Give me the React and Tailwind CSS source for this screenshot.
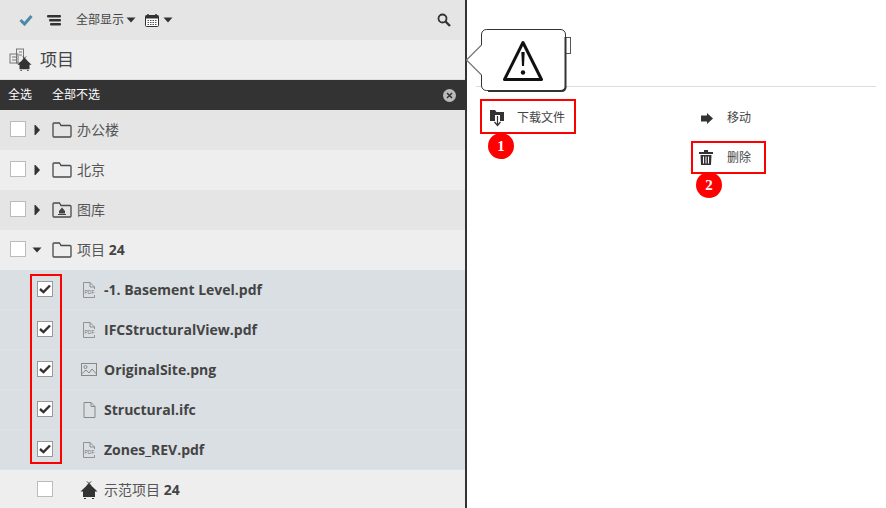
const Caret = ({ d = "down", className = "" }) => (
  <svg width="10" height="10" viewBox="0 0 10 10" className={className} fill="#333">
    {d === "down" ? <path d="M0.5 2.5h9L5 7.5z" /> : <path d="M2.5 0h1L8 5 3.5 10h-1z" />}
  </svg>
);

const Folder = ({ inner }) => (
  <svg width="20" height="16" viewBox="0 0 20 16" fill="none">
    <path d="M1 3V14a1 1 0 0 0 1 1H18a1 1 0 0 0 1-1V4.500a1 1 0 0 0-1-1H9L7.500 1H2A1 1 0 0 0 1 2z" stroke="#4a4a4a" strokeWidth="1.300" />
    {inner && <path d="M10 5.500 13 9v2.500H7V9z M6 12h8v1H6z" fill="#444" />}
  </svg>
);

const Box = ({ checked }) => (
  <span className={`w-[14px] h-[14px] mb-[2px] box-content shrink-0 border flex items-center justify-center bg-white ${checked ? "border-[#999]" : "border-[#bbb]"}`}>
    {checked && (
      <svg width="12" height="10" viewBox="0 0 12 10"><path d="M1 5 4.500 8.200 11 1.500" stroke="#333" strokeWidth="2.400" fill="none" /></svg>
    )}
  </span>
);

const PdfIcon = () => (
  <svg width="14" height="16" viewBox="0 0 14 16" fill="none" stroke="#888" strokeWidth="0.900">
    <path d="M1.500.5H8L12.500 5v2M1.500.5V15.500H12.500V13M8 .5V5H12.500" />
    <text x="2.500" y="12" fontSize="5" fontFamily="Liberation Sans" fill="#777" stroke="none" textLength="10">PDF</text>
  </svg>
);
const ImgIcon = () => (
  <svg width="16" height="14" viewBox="0 0 16 14" fill="none" stroke="#888">
    <rect x=".5" y=".5" width="15" height="12" />
    <circle cx="4.500" cy="4" r="1.500" />
    <path d="M.5 11 5 7l3 3 3-4 4.500 5" />
  </svg>
);
const FileIcon = () => (
  <svg width="13" height="16" viewBox="0 0 13 16" fill="none" stroke="#888">
    <path d="M1 .5H8L12 4.500V15.500H1zM8 .5V4.500H12" />
  </svg>
);
const House = ({ className = "", size = 18 }) => (
  <svg width={size} height={size} viewBox="0 0 18 18" className={className}>
    <path d="M9 2.500 17.500 10.500H15V16H3V10.500H.5z" fill="#333" />
    <path d="M7 .5 11 4.500M11 .5 7 4.500M4 17.500h2M12 17.500h2" stroke="#333" />
  </svg>
);

const folderRows = [
  { name: "办公楼", bg: "bg-[#e5e5e5]" },
  { name: "北京", bg: "bg-[#eeeeee]" },
  { name: "图库", bg: "bg-[#e5e5e5]", inner: true },
];
const files = [
  ["-1. Basement Level.pdf", <PdfIcon />],
  ["IFCStructuralView.pdf", <PdfIcon />],
  ["OriginalSite.png", <ImgIcon />],
  ["Structural.ifc", <FileIcon />],
  ["Zones_REV.pdf", <PdfIcon />],
];

const Badge = ({ n, className }) => (
  <span className={`absolute w-[26px] h-[26px] rounded-full bg-[#fe0000] text-white font-bold text-[15px] flex items-center justify-center font-['Liberation_Serif',serif] ${className}`}>{n}</span>
);

export default function App() {
  return (
    <div className="relative w-[886px] h-[508px] overflow-hidden flex bg-white text-[#444] font-['Open_Sans','Noto_Sans_CJK_SC',sans-serif]">
      <div className="w-[467px] h-full shrink-0 border-r-2 border-[#333] flex flex-col">
        <div className="h-10 shrink-0 bg-[#e5e5e5] flex items-center pl-[19px] pr-[14px]">
          <svg width="14" height="12" viewBox="0 0 14 12"><path d="M1.500 6 5.500 10 12.500 2" stroke="#4a8aa8" strokeWidth="3" fill="none" /></svg>
          <svg width="14" height="12" viewBox="0 0 14 12" className="ml-[14px]" fill="#333">
            <rect x="0" y="1" width="14" height="2.500" rx="1" /><rect x="2" y="5" width="12" height="2.500" rx="1" /><rect x="3" y="9" width="11" height="2.500" rx="1" />
          </svg>
          <span className="ml-[15px] text-xs text-[#444]">全部显示</span>
          <Caret className="ml-[2px]" />
          <svg width="14" height="13" viewBox="0 0 14 13" className="ml-[9px]">
            <rect x=".5" y="1.500" width="13" height="11" rx="1" fill="#fff" stroke="#333" />
            <rect x=".5" y="1.500" width="13" height="3" fill="#333" />
            <path d="M3 0v3M11 0v3" stroke="#333" strokeWidth="1.500" />
            <path d="M2.500 6.500h9M2.500 8.500h9M2.500 10.500h9" stroke="#555" strokeDasharray="1.500 1" />
          </svg>
          <Caret className="ml-[4px]" />
          <svg width="14" height="14" viewBox="0 0 14 14" className="ml-auto" fill="none" stroke="#333">
            <circle cx="5.500" cy="5.500" r="4" strokeWidth="1.800" />
            <path d="M8.500 8.500 13 13" strokeWidth="2.400" />
          </svg>
        </div>
        <div className="h-10 shrink-0 bg-[#eeeeee] border-b border-[#ddd] flex items-center pl-[9px]">
          <span className="relative w-[23px] h-[24px] block">
            <svg width="16" height="18" viewBox="0 0 16 18" className="absolute left-0 top-0" fill="none" stroke="#777">
              <rect x="7.500" y="1" width="7" height="14" /><rect x="1" y="6" width="8" height="9" />
              <path d="M3 9h4M3 12h4M10 4h3M10 7h3" />
            </svg>
            <House className="absolute left-[8px] top-[8px]" size={15} />
          </span>
          <span className="ml-[8px] text-[17px] text-[#444]">项目</span>
        </div>
        <div className="h-[30px] shrink-0 bg-[#333333] flex items-center pl-2 pr-[9px] text-xs text-white">
          <span>全选</span>
          <span className="ml-5">全部不选</span>
          <span className="ml-auto w-[13px] h-[13px] rounded-full bg-[#bbb] flex items-center justify-center">
            <svg width="7" height="7" viewBox="0 0 7 7"><path d="M1 1l5 5M6 1 1 6" stroke="#333" strokeWidth="1.500" /></svg>
          </span>
        </div>
        {folderRows.map((r) => (
          <div key={r.name} className={`h-10 shrink-0 flex items-center pl-[10px] ${r.bg}`}>
            <Box />
            <Caret d="right" className="ml-[6px]" />
            <span className="ml-[10px] flex"><Folder inner={r.inner} /></span>
            <span className="ml-[5px] text-sm text-[#555]">{r.name}</span>
          </div>
        ))}
        <div className="h-10 shrink-0 flex items-center pl-[10px] bg-[#eeeeee]">
          <Box />
          <Caret className="ml-[6px]" />
          <span className="ml-[10px] flex"><Folder /></span>
          <span className="ml-[5px] text-sm text-[#555]">项目 <b className="text-[#444]">24</b></span>
        </div>
        {files.map(([name, icon]) => (
          <div key={name} className="h-10 shrink-0 flex items-center pl-[37px] bg-[#dadfe3] border-b border-[#dde2e6]">
            <Box checked />
            <span className="ml-[28px] w-4 flex justify-center">{icon}</span>
            <span className="ml-[7px] text-sm font-bold text-[#444]">{name}</span>
          </div>
        ))}
        <div className="h-10 shrink-0 flex items-center pl-[37px] bg-[#eeeeee]">
          <Box />
          <House className="ml-[27px]" />
          <span className="ml-[6px] text-sm text-[#555]">示范项目 <b className="text-[#444]">24</b></span>
        </div>
      </div>

      <div className="flex-1 flex flex-col pl-[9px] pr-[10px] border-r border-[#ddd]">
        <div className="h-[87px] shrink-0 border-b border-[#ddd]" />
        <div className="grid grid-cols-2 w-[400px] text-xs text-[#444] pt-[21px] pl-[14px] gap-y-5">
          <div className="h-5 flex items-center">
            <svg width="15" height="18" viewBox="0 0 15 18">
              <path d="M0 1h5l1.500 2H14v9H10V6H5v6H0z" fill="#333" />
              <path d="M7.500 7v9M4.500 13 7.500 16.500 10.500 13" stroke="#333" fill="none" strokeWidth="1.200" />
            </svg>
            <span className="ml-[12px]">下载文件</span>
          </div>
          <div className="h-5 flex items-center pl-[18px]">
            <svg width="12" height="11" viewBox="0 0 12 11" fill="#333"><path d="M0 2.500h6V0l6 5.500L6 11V8.500H0z" /></svg>
            <span className="ml-[14px]">移动</span>
          </div>
          <div />
          <div className="h-5 flex items-center pl-[16px]">
            <svg width="14" height="15" viewBox="0 0 14 15" fill="#333" className="mb-[2px]">
              <path d="M0 2h5V0h4v2h5v2H0z" />
              <path d="M1.500 5h11L12 15H2zM4 6.500V13.500h1V6.500zM6.500 6.500V13.500h1V6.500zM9 6.500V13.500h1V6.500z" fillRule="evenodd" />
            </svg>
            <span className="ml-[14px]">删除</span>
          </div>
        </div>
      </div>

      {/* annotations and callout */}
      <span className="absolute left-[30px] top-[274px] w-[32px] h-[190px] border-2 border-[#fe0000]" />
      <span className="absolute left-[480px] top-[99px] w-[96px] h-[35px] border-2 border-[#fe0000]" />
      <span className="absolute left-[691px] top-[141px] w-[75px] h-[33px] border-2 border-[#fe0000]" />
      <Badge n="1" className="left-[488px] top-[133px]" />
      <Badge n="2" className="left-[696px] top-[172px]" />

      <span className="absolute left-[566px] top-[37px] w-[5px] h-[17px] border border-l-0 border-[#555] bg-white" />
      <div className="absolute left-[466px] top-[29px] w-[101px] h-[63px]">
        <svg width="101" height="63" viewBox="0 0 101 63" className="absolute inset-0 overflow-visible">
          <path d="M20.500 .5H94a5 5 0 0 1 5.500 5.500V56a5 5 0 0 1-5.500 5.500H20.500a5 5 0 0 1-5-5.500V46L.5 31 15.500 16V6a5 5 0 0 1 5-5.500z" fill="#fff" stroke="#333" />
          <path d="M99.500 8V57a4 4 0 0 1-4 5H22" fill="none" stroke="#333" strokeWidth="2" />
          <path d="M.5 31 15.500 16M.5 31 15.500 46" stroke="#888" strokeWidth="1.200" />
          <path d="M57 13.500 75.500 50.500H38.500z" fill="#fff" stroke="#111" strokeWidth="3" strokeLinejoin="round" />
          <path d="M55.300 23H58.700L58 37H56z" fill="#111" />
          <circle cx="57" cy="43.500" r="2.200" fill="#111" />
        </svg>
      </div>
    </div>
  );
}
